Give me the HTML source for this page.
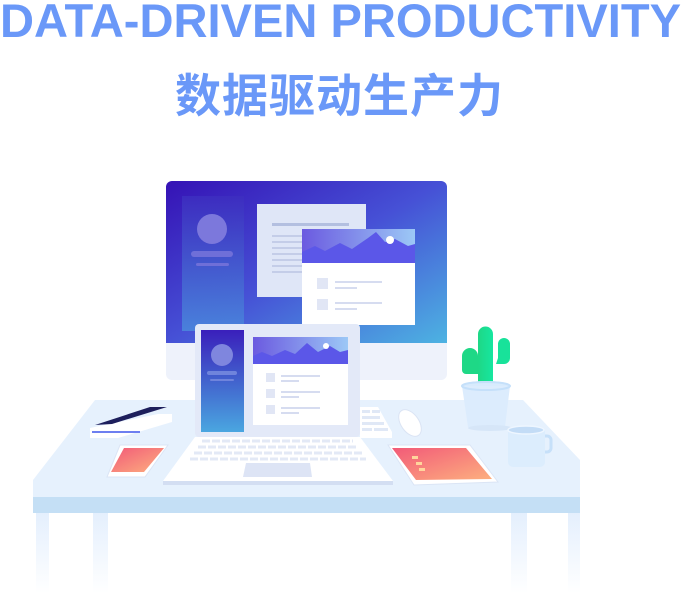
<!DOCTYPE html>
<html><head><meta charset="utf-8"><style>
html,body{margin:0;padding:0;background:#fff;width:681px;height:606px;overflow:hidden;position:relative}
svg{display:block}
.cn{position:absolute;left:175px;top:66px;font-family:"Liberation Sans","Noto Sans CJK SC",sans-serif;font-weight:bold;font-size:46px;line-height:60px;color:#6a98f8;letter-spacing:1px;white-space:nowrap}
</style></head><body>
<svg width="681" height="606" viewBox="0 0 681 606" xmlns="http://www.w3.org/2000/svg">
<defs>
<linearGradient id="scr" x1="0" y1="0" x2="1" y2="1"><stop offset="0" stop-color="#3512b5"/><stop offset="0.5" stop-color="#4651d6"/><stop offset="1" stop-color="#4db3e2"/></linearGradient>
<linearGradient id="side" x1="0" y1="0" x2="0" y2="1"><stop offset="0" stop-color="#3d2dc0"/><stop offset="1" stop-color="#4a86dc"/></linearGradient>
<linearGradient id="lside" x1="0" y1="0" x2="0" y2="1"><stop offset="0" stop-color="#3a1fbb"/><stop offset="1" stop-color="#4aa6e0"/></linearGradient>
<linearGradient id="hdr" x1="0" y1="0" x2="1" y2="0"><stop offset="0" stop-color="#6b5ae0"/><stop offset="1" stop-color="#9cc8f6"/></linearGradient>
<linearGradient id="red" x1="0" y1="0" x2="1" y2="1"><stop offset="0" stop-color="#f25a78"/><stop offset="1" stop-color="#fdb07f"/></linearGradient>
<linearGradient id="leg" x1="0" y1="0" x2="0" y2="1"><stop offset="0" stop-color="#e4effd"/><stop offset="1" stop-color="#ffffff"/></linearGradient>
<linearGradient id="cac" x1="0" y1="0" x2="1" y2="0"><stop offset="0" stop-color="#1ed886"/><stop offset="1" stop-color="#16e6a0"/></linearGradient>
</defs>
<text x="0" y="37" font-family="Liberation Sans, sans-serif" font-weight="bold" font-size="47" fill="#6a98f8" textLength="681" lengthAdjust="spacingAndGlyphs">DATA-DRIVEN PRODUCTIVITY</text>

<!-- legs -->
<rect x="36" y="513" width="13" height="80" fill="url(#leg)"/>
<rect x="93" y="513" width="15" height="80" fill="url(#leg)"/>
<rect x="511" y="513" width="16" height="80" fill="url(#leg)"/>
<rect x="568" y="513" width="12" height="80" fill="url(#leg)"/>
<!-- desk -->
<polygon points="95,400 523,400 580,460 580,497 33,497 33,480" fill="#e6f1fd"/>
<rect x="33" y="497" width="547" height="16" fill="#c4dff5"/>

<!-- monitor -->
<rect x="166" y="181" width="281" height="199" rx="6" fill="#eef2fb"/>
<path d="M172,181 H441 a6,6 0 0 1 6,6 V343 H166 V187 a6,6 0 0 1 6,-6z" fill="url(#scr)"/>
<rect x="182" y="196" width="62" height="135" fill="url(#side)" opacity="0.9"/>
<circle cx="212" cy="229" r="15" fill="#7c78dc"/>
<rect x="191" y="251" width="42" height="6" rx="3" fill="#6f6fd8"/>
<rect x="196" y="263" width="33" height="3" rx="1.5" fill="#6f6fd8"/>
<rect x="257" y="204" width="109" height="93" fill="#dfe6f7"/>
<rect x="272" y="223" width="77" height="3" fill="#b3bfe0"/>
<g fill="#c4cde8"><rect x="272" y="235" width="30" height="2"/><rect x="272" y="241" width="30" height="2"/><rect x="272" y="247" width="30" height="2"/><rect x="272" y="253" width="30" height="2"/><rect x="272" y="259" width="30" height="2"/><rect x="272" y="265" width="30" height="2"/><rect x="272" y="271" width="30" height="2"/></g>
<rect x="302" y="229" width="113" height="96" fill="#fff"/>
<rect x="302" y="229" width="113" height="34" fill="url(#hdr)"/>
<path d="M302,252 L315,246 L325,251 L340,243 L352,249 L368,238 L376,232 L385,242 L395,239 L408,246 L415,244 V263 H302z" fill="#5b57e8"/>
<circle cx="390" cy="240" r="4" fill="#fff"/>
<g fill="#e1e6f5"><rect x="317" y="278" width="11" height="11"/><rect x="317" y="299" width="11" height="11"/></g>
<g fill="#d6dcf0"><rect x="335" y="281" width="47" height="2"/><rect x="335" y="287" width="22" height="2"/><rect x="335" y="302" width="47" height="2"/><rect x="335" y="308" width="22" height="2"/></g>

<!-- cactus -->
<path d="M462,370 v-14 a8,8 0 0 1 16,0 v14z" fill="#1ed886"/>
<rect x="462" y="364" width="20" height="10" rx="4" fill="#1ed886"/>
<path d="M498,358 v-14 a6,6 0 0 1 12,0 v14 a6,6 0 0 1 -6,6 h-8z" fill="#18e29a"/>
<path d="M478,388 V334 a7.5,7.5 0 0 1 15,0 V388z" fill="url(#cac)"/>
<ellipse cx="486" cy="386" rx="24" ry="5" fill="#d8ebfd"/>
<path d="M462,386 H510 L505,427 H468z" fill="#dcecfd"/>
<ellipse cx="486" cy="386" rx="24" ry="4" fill="none" stroke="#c5e0fa" stroke-width="2"/>
<ellipse cx="490" cy="428" rx="22" ry="3" fill="#d6e6f8"/>
<!-- cup -->
<rect x="538" y="436" width="13" height="16" rx="4" fill="none" stroke="#c6e0f9" stroke-width="3"/>
<path d="M508,430 H545 V462 a5,5 0 0 1 -5,5 H513 a5,5 0 0 1 -5,-5z" fill="#dcedfd"/>
<ellipse cx="526" cy="430" rx="18" ry="4" fill="#c3dcf6" stroke="#eef6ff" stroke-width="1.5"/>
<!-- mouse -->
<ellipse cx="410" cy="423" rx="9" ry="15" transform="rotate(-35 410 423)" fill="#fff" stroke="#dbe4f4"/>
<!-- keyboard -->
<polygon points="360,407 378,407 392,432 392,438 360,438" fill="#fff"/>
<g fill="#e0e8f6"><rect x="362" y="410" width="8" height="3"/><rect x="372" y="410" width="8" height="3"/><rect x="362" y="416" width="18" height="3"/><rect x="362" y="422" width="22" height="3"/><rect x="362" y="428" width="10" height="3"/><rect x="374" y="428" width="14" height="3"/></g>
<!-- book/phone stack -->
<polygon points="90,428 158,414 172,414 172,422 118,438 90,438" fill="#fff"/>
<polygon points="95,425 150,407 167,407 112,424" fill="#1d1f5c"/>
<rect x="92" y="431" width="48" height="2" fill="#6d7ff0"/>
<!-- phone -->
<polygon points="120,445 168,445 145,477 107,477" fill="#fff" stroke="#dbe5f5"/>
<polygon points="124,448 164,448 144,472 111,472" fill="url(#red)"/>
<!-- tablet -->
<polygon points="388,445 470,445 498,482 414,485" fill="#fff" stroke="#dbe5f5"/>
<polygon points="392,448 466,448 492,479 416,480" fill="url(#red)"/>
<g fill="#ffd59c"><rect x="412" y="456" width="6" height="3"/><rect x="416" y="462" width="6" height="3"/><rect x="419" y="468" width="6" height="3"/></g>

<!-- laptop -->
<polygon points="195,437 360,437 393,481 163,481" fill="#fff"/>
<rect x="163" y="481" width="230" height="4" fill="#d3def2"/>
<g stroke="#e3e9f6" stroke-width="3" stroke-dasharray="8 2">
<line x1="202" y1="441" x2="353" y2="441"/><line x1="198" y1="447" x2="358" y2="447"/><line x1="194" y1="453" x2="362" y2="453"/><line x1="190" y1="459" x2="366" y2="459"/></g>
<polygon points="246,463 310,463 312,477 243,477" fill="#dde4f5"/>
<rect x="195" y="324" width="165" height="113" rx="4" fill="#e3e9f8"/>
<rect x="201" y="330" width="43" height="102" fill="url(#lside)"/>
<circle cx="222" cy="355" r="11" fill="#7f86de"/>
<rect x="207" y="371" width="30" height="4" rx="2" fill="#6f84dc"/>
<rect x="210" y="379" width="24" height="2" rx="1" fill="#6f84dc"/>
<rect x="253" y="337" width="95" height="88" fill="#fff"/>
<rect x="253" y="337" width="95" height="27" fill="url(#hdr)"/>
<path d="M253,356 L262,352 L272,356 L285,350 L295,354 L307,343 L318,352 L330,346 L340,352 L348,350 V364 H253z" fill="#5b57e8"/>
<circle cx="326" cy="346" r="3" fill="#fff"/>
<g fill="#e1e6f5"><rect x="266" y="373" width="9" height="9"/><rect x="266" y="389" width="9" height="9"/><rect x="266" y="405" width="9" height="9"/></g>
<g fill="#d6dcf0"><rect x="281" y="375" width="39" height="2"/><rect x="281" y="380" width="18" height="2"/><rect x="281" y="391" width="39" height="2"/><rect x="281" y="396" width="18" height="2"/><rect x="281" y="407" width="39" height="2"/><rect x="281" y="412" width="18" height="2"/></g>
</svg>
<div class="cn">数据驱动生产力</div>
</body></html>
